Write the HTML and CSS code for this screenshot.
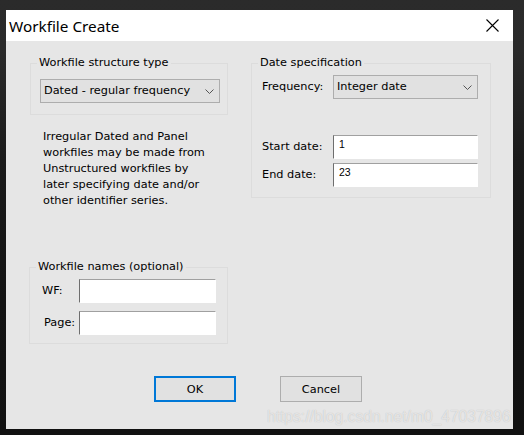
FILE: index.html
```html
<!DOCTYPE html>
<html>
<head>
<meta charset="utf-8">
<link rel="stylesheet" href="styles.css">
</head>
<body>
<div class="window">
  <div class="titlebar">
    <span class="title">Workfile Create</span>
    <svg class="close" width="13" height="13" viewBox="0 0 13 13"><path d="M0.5 0.5 L12.5 12.5 M12.5 0.5 L0.5 12.5" stroke="#000" stroke-width="1.1" fill="none"/></svg>
  </div>
  <div class="content">
    <div class="columns">
      <div class="col-left">
        <fieldset class="group group-structure">
          <legend>Workfile structure type</legend>
          <div class="combo combo-structure">
            <span>Dated - regular frequency</span>
            <svg class="chev" width="9" height="5" viewBox="0 0 9 5"><polyline points="0.5,0.5 4.5,4.5 8.5,0.5" fill="none" stroke="#555" stroke-width="1"/></svg>
          </div>
        </fieldset>
        <p class="note">Irregular Dated and Panel<br>workfiles may be made from<br>Unstructured workfiles by<br>later specifying date and/or<br>other identifier series.</p>
        <fieldset class="group group-names">
          <legend>Workfile names (optional)</legend>
          <div class="row">
            <label class="lbl lbl-wf">WF:</label>
            <input class="field field-names" type="text" value="">
          </div>
          <div class="row row-page">
            <label class="lbl lbl-page">Page:</label>
            <input class="field field-names" type="text" value="">
          </div>
        </fieldset>
      </div>
      <div class="col-right">
        <fieldset class="group group-date">
          <legend>Date specification</legend>
          <div class="row">
            <label class="lbl lbl-date">Frequency:</label>
            <div class="combo combo-freq">
              <span>Integer date</span>
              <svg class="chev" width="9" height="5" viewBox="0 0 9 5"><polyline points="0.5,0.5 4.5,4.5 8.5,0.5" fill="none" stroke="#555" stroke-width="1"/></svg>
            </div>
          </div>
          <div class="row row-start">
            <label class="lbl lbl-date">Start date:</label>
            <input class="field field-date" type="text" value="1">
          </div>
          <div class="row row-end">
            <label class="lbl lbl-date">End date:</label>
            <input class="field field-date" type="text" value="23">
          </div>
        </fieldset>
      </div>
    </div>
    <div class="buttons">
      <button class="btn btn-default">OK</button>
      <button class="btn">Cancel</button>
    </div>
    <div class="watermark">https://blog.csdn.net/m0_47037896</div>
  </div>
</div>
</body>
</html>
```
FILE: styles.css
```css
html, body {
  margin: 0;
  padding: 0;
}
body {
  width: 524px;
  height: 435px;
  overflow: hidden;
  background: linear-gradient(#2b2b2b 0px, #2a2a2a 50px, #1a1a1a 160px, #131313 300px, #111111 435px);
  font-family: "DejaVu Sans", Verdana, sans-serif;
  font-size: 11.3px;
  color: #000;
}
.window {
  margin: 10px 0 0 6px;
  width: 507px;
  height: 419px;
  overflow: hidden;
  display: flex;
  flex-direction: column;
}
.titlebar {
  height: 31px;
  flex: none;
  background: #fff;
  display: flex;
  align-items: center;
  justify-content: space-between;
  padding: 0 14px 0 3px;
}
.title {
  font-family: "Noto Sans", "Open Sans", sans-serif;
  font-size: 15.3px;
  color: #000;
  line-height: 20px;
  padding-top: 1px;
}
.close {
  display: block;
}
.content {
  flex: 1;
  background: #e6e6e6;
  position: relative;
  padding-top: 14px;
}
.columns {
  display: flex;
  gap: 23px;
  padding-left: 24px;
}
.col-left {
  width: 198px;
}
.col-right {
  width: 240px;
}
.group {
  margin: 0;
  min-width: 0;
  box-sizing: border-box;
  border: 1px solid #dcdcdc;
  padding: 0 8px;
}
.group legend {
  padding: 0 2px;
  margin-left: -2px;
  line-height: 16px;
  font-size: 11.3px;
}
.group-structure {
  width: 198px;
  padding-top: 8px;
  padding-bottom: 11px;
}
.combo {
  box-sizing: border-box;
  height: 24px;
  background: #e1e1e1;
  border: 1px solid #adadad;
  display: flex;
  align-items: center;
  justify-content: space-between;
  padding: 0 5px 0 3px;
}
.combo span {
  line-height: 16px;
}
.chev {
  display: block;
}
.combo-structure {
  width: 180px;
  margin-left: 1px;
}
.note {
  margin: 14px 0 0 0;
  padding-left: 13px;
  line-height: 16px;
}
.group-names {
  width: 199px;
  margin-left: -1px;
  margin-top: 50px;
  padding-top: 4px;
  padding-bottom: 8px;
}
.row {
  display: flex;
  align-items: center;
}
.lbl {
  line-height: 16px;
}
.lbl-wf {
  width: 41px;
  box-sizing: border-box;
  padding-left: 4px;
}
.lbl-page {
  width: 41px;
  box-sizing: border-box;
  padding-left: 6px;
}
.row-page {
  margin-top: 8px;
}
.field {
  box-sizing: border-box;
  height: 24px;
  margin: 0;
  background: #fff;
  border: 1px solid #fff;
  border-top-color: #a0a0a0;
  border-left-color: #6e6e6e;
  font-family: "Liberation Sans", Arial, sans-serif;
  font-size: 10.5px;
  padding: 0 5px 6px 5px;
  color: #000;
  outline: none;
}
.field-names {
  width: 137px;
}
.group-date {
  width: 240px;
  padding-top: 4px;
  padding-bottom: 10px;
}
.lbl-date {
  width: 73px;
  box-sizing: border-box;
  padding-left: 2px;
}
.combo-freq {
  width: 145px;
}
.field-date {
  width: 145px;
}
.row-start {
  margin-top: 36px;
}
.row-end {
  margin-top: 4px;
}
.buttons {
  display: flex;
  gap: 44px;
  padding-left: 148px;
  margin-top: 32px;
}
.btn {
  box-sizing: border-box;
  width: 82px;
  height: 26px;
  margin: 0;
  padding: 0;
  background: #e1e1e1;
  border: 1px solid #adadad;
  font-family: "DejaVu Sans", Verdana, sans-serif;
  font-size: 11.3px;
  color: #000;
}
.btn-default {
  border: 2px solid #0078d7;
}
.watermark {
  position: absolute;
  left: 261px;
  top: 367px;
  font-family: "Liberation Sans", Arial, sans-serif;
  font-size: 15.6px;
  line-height: 18px;
  white-space: nowrap;
  color: rgba(255, 255, 255, 0.6);
  text-shadow: 0 0 1px rgba(0, 0, 0, 0.22);
}
```
